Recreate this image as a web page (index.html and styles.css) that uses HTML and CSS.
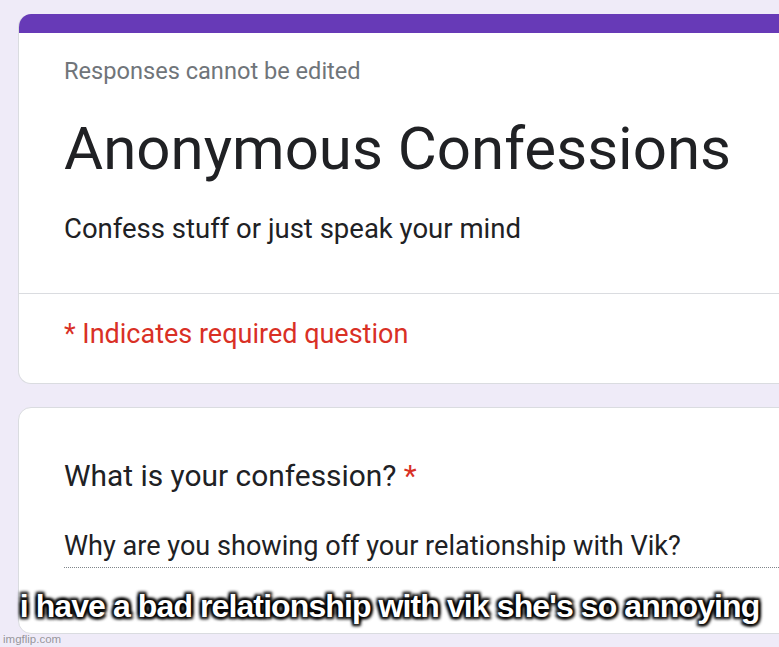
FILE: index.html
```html
<!DOCTYPE html>
<html lang="en">
<head>
<meta charset="utf-8">
<title>Anonymous Confessions</title>
<link rel="stylesheet" href="styles.css">
</head>
<body>
<div class="page">
  <section class="card header-card">
    <div class="accent"></div>
    <div class="header-body">
      <div class="note">Responses cannot be edited</div>
      <h1 class="title">Anonymous Confessions</h1>
      <p class="desc">Confess stuff or just speak your mind</p>
    </div>
    <div class="required-row">
      <span class="required">* Indicates required question</span>
    </div>
  </section>
  <section class="card question-card">
    <div class="question">What is your confession? <span class="star">*</span></div>
    <div class="answer">Why are you showing off your relationship with Vik?</div>
  </section>
  <div class="caption">i have a bad relationship with vik she's so annoying</div>
  <div class="watermark">imgflip.com</div>
</div>
</body>
</html>
```

FILE: styles.css
```css
html, body {
  margin: 0;
  padding: 0;
}
body {
  background: #efebf8;
  width: 779px;
  height: 647px;
  overflow: hidden;
  font-family: Roboto, "Noto Sans", Arial, sans-serif;
  color: #202124;
}
.page {
  position: relative;
  width: 779px;
  height: 647px;
  padding-top: 14px;
  box-sizing: border-box;
  overflow: hidden;
}
.card {
  margin-left: 18px;
  width: 820px;
  background: #fff;
  border: 1px solid #dadce0;
  border-radius: 13px;
  box-sizing: border-box;
  overflow: hidden;
}
.header-card {
  height: 370px;
  border-top: none;
}
.accent {
  height: 19px;
  background: #673ab7;
}
.header-body {
  padding: 24px 0 0 45px;
  height: 261px;
  box-sizing: border-box;
  border-bottom: 1px solid #dadce0;
}
.note {
  font-size: 23.6px;
  line-height: 28px;
  color: #70757a;
}
.title {
  margin: 28px 0 0;
  font-size: 60px;
  line-height: 72px;
  font-weight: 400;
  color: #202124;
}
.desc {
  margin: 28px 0 0;
  font-size: 27.5px;
  line-height: 32px;
  color: #202124;
}
.required-row {
  padding: 24px 0 0 45px;
}
.required {
  font-size: 27px;
  line-height: 32px;
  color: #d93025;
}
.question-card {
  margin-top: 23px;
  height: 227px;
  padding: 50px 0 0 45px;
}
.question {
  font-size: 29.9px;
  line-height: 36px;
  color: #202124;
}
.star {
  color: #d93025;
}
.answer {
  margin-top: 36px;
  font-size: 27.1px;
  line-height: 32px;
  padding-bottom: 5px;
  border-bottom: 1px dotted #80868b;
  color: #202124;
}
.caption {
  position: absolute;
  left: 0;
  right: 0;
  top: 588px;
  text-align: center;
  font-family: "Liberation Sans", Arial, sans-serif;
  font-weight: 700;
  font-size: 32px;
  line-height: 36px;
  letter-spacing: -0.9px;
  color: #fff;
  white-space: nowrap;
  text-shadow: -2px -2px 3px #000, 2px -2px 3px #000, -2px 2px 3px #000, 2px 2px 3px #000, 0 0 5px #000;
}
.watermark {
  position: absolute;
  left: 3px;
  top: 633px;
  font-family: "Liberation Sans", Arial, sans-serif;
  font-size: 11.5px;
  line-height: 13px;
  color: rgba(110, 110, 110, 0.7);
}
```
